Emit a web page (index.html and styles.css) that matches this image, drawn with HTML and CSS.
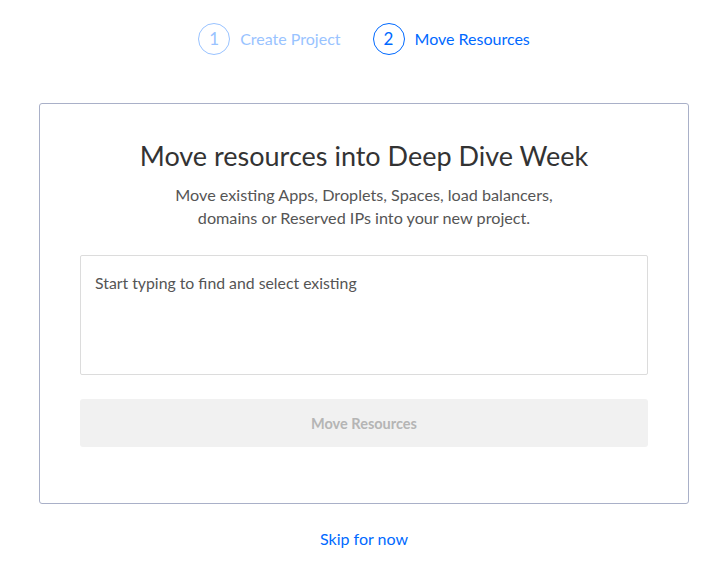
FILE: index.html
```html
<!DOCTYPE html>
<html lang="en">
<head>
<meta charset="utf-8">
<title>Move Resources</title>
<link rel="stylesheet" href="styles.css">
</head>
<body>
<div class="page">
  <div class="steps">
    <div class="step step-done">
      <span class="step-num">1</span>
      <span class="step-label">Create Project</span>
    </div>
    <div class="step step-active">
      <span class="step-num">2</span>
      <span class="step-label">Move Resources</span>
    </div>
  </div>
  <div class="card">
    <h1 class="title">Move resources into Deep Dive Week</h1>
    <p class="subtitle">Move existing Apps, Droplets, Spaces, load balancers,<br>domains or Reserved IPs into your new project.</p>
    <div class="picker">Start typing to find and select existing</div>
    <button class="btn-move" type="button" disabled>Move Resources</button>
  </div>
  <div class="skip"><a href="#" class="skip-link">Skip for now</a></div>
</div>
</body>
</html>
```
FILE: styles.css
```css
html, body {
  margin: 0;
  padding: 0;
  background: #fff;
}
body {
  font-family: "Lato", "Open Sans", sans-serif;
  color: #333;
}
.page {
  width: 650px;
  margin-left: 39px;
}
.steps {
  display: flex;
  justify-content: center;
  gap: 32px;
  padding-top: 23px;
}
.step {
  display: flex;
  align-items: center;
  gap: 10px;
  font-size: 16px;
}
.step-label {
  padding-bottom: 2px;
}
.step-num {
  box-sizing: border-box;
  width: 32px;
  height: 32px;
  border-radius: 50%;
  border: 1px solid currentColor;
  display: flex;
  align-items: center;
  justify-content: center;
  padding-bottom: 2px;
  font-size: 17px;
}
.step-done { color: #99c3ff; }
.step-active { color: #0069ff; }
.card {
  margin-top: 48px;
  border: 1px solid #a9b0c8;
  border-radius: 3px;
  padding: 36px 40px 56px;
  text-align: center;
}
.title {
  margin: 0;
  font-size: 27px;
  line-height: 32px;
  font-weight: 400;
  color: #333;
}
.subtitle {
  margin: 11px 0 0;
  font-size: 16.2px;
  line-height: 23px;
  color: #555;
}
.picker {
  box-sizing: border-box;
  margin-top: 26px;
  height: 120px;
  border: 1px solid #dcdcdc;
  border-radius: 2px;
  padding: 17px 14px;
  text-align: left;
  font-size: 15.8px;
  line-height: 20px;
  color: #555;
}
.btn-move {
  display: block;
  width: 100%;
  margin-top: 24px;
  height: 48px;
  border: none;
  border-radius: 3px;
  background: #f1f1f1;
  color: #b5b5b5;
  font-family: inherit;
  font-size: 14.5px;
  font-weight: 700;
}
.skip {
  margin-top: 25px;
  text-align: center;
  font-size: 16px;
  line-height: 20px;
}
.skip-link {
  color: #0069ff;
  text-decoration: none;
}
```
